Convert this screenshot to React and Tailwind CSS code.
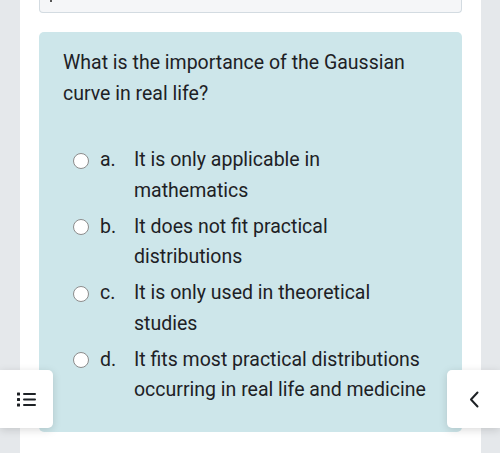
export default function App() {
  const options = [
    { key: "a.", text: ["It is only applicable in", "mathematics"] },
    { key: "b.", text: ["It does not fit practical", "distributions"] },
    { key: "c.", text: ["It is only used in theoretical", "studies"] },
    { key: "d.", text: ["It fits most practical distributions", "occurring in real life and medicine"] },
  ]

  return (
    <div className="relative h-[453px] w-[500px] overflow-hidden bg-[#e5e8eb] font-['Roboto',sans-serif] text-[#1d2125]">
      <div className="mx-[20px] h-full w-[461px] bg-white px-[19px]">
        {/* previous question box, cut off at top */}
        <div className="relative h-[13px] rounded-b-[4px] border border-t-0 border-[#d3dbe1] bg-[#f5f6f8]">
          <span className="absolute left-[10px] top-0 h-[2px] w-[2px] rounded-full bg-[#222]" />
        </div>

        <div className="mt-[19px] h-[400px] rounded-[5px] bg-[#cde6ea] pl-[24px] pr-[16px] pt-[15px]">
          <p className="text-[19.5px] leading-[31px]">
            What is the importance of the Gaussian
            <br />
            curve in real life?
          </p>

          <div className="mt-[36px] flex flex-col gap-[5.5px] pl-[10px]">
            {options.map((o) => (
              <div key={o.key} className="flex text-[19.5px] leading-[30.5px]">
                <span className="mt-[7.5px] h-[16px] w-[16px] shrink-0 rounded-full border border-[#8c8c8c] bg-white" />
                <span className="ml-[11px] w-[34px] shrink-0">{o.key}</span>
                <span>
                  {o.text[0]}
                  <br />
                  {o.text[1]}
                </span>
              </div>
            ))}
          </div>
        </div>
      </div>

      {/* floating nav buttons */}
      <button className="absolute left-0 top-[370px] flex h-[58px] w-[53px] items-center justify-center rounded-r-[5px] bg-white shadow-[0_2px_8px_rgba(0,0,0,0.15)]">
        <svg width="19" height="15" viewBox="0 0 19 15">
          <rect x="0" y="0.5" width="3" height="3" rx="0.5" fill="#1d2125" />
          <rect x="0" y="6" width="3" height="3" rx="0.5" fill="#1d2125" />
          <rect x="0" y="11.5" width="3" height="3" rx="0.5" fill="#1d2125" />
          <rect x="6" y="1" width="13" height="2" rx="1" fill="#1d2125" />
          <rect x="6" y="6.5" width="13" height="2" rx="1" fill="#1d2125" />
          <rect x="6" y="12" width="13" height="2" rx="1" fill="#1d2125" />
        </svg>
      </button>
      <button className="absolute left-[447px] top-[370px] flex h-[58px] w-[53px] items-center justify-center rounded-l-[5px] bg-white shadow-[0_2px_8px_rgba(0,0,0,0.15)]">
        <svg width="12" height="17" viewBox="0 0 12 17" fill="none">
          <path d="M9.5 1.5 L3 8.5 L9.5 15.5" stroke="#1d2125" strokeWidth="2" strokeLinecap="round" strokeLinejoin="round" />
        </svg>
      </button>
    </div>
  )
}
